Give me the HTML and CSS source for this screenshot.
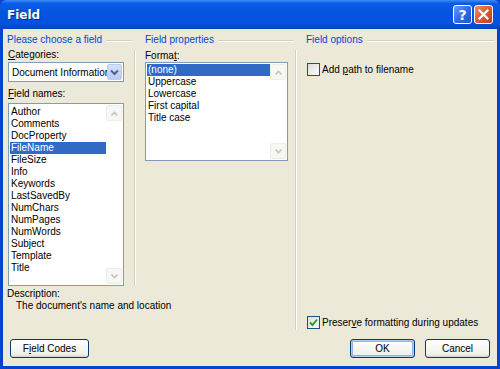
FILE: index.html
```html
<!DOCTYPE html>
<html lang="en">
<head>
    <meta charset="UTF-8">
    <title>Field</title>
    <link rel="stylesheet" href="styles.css">
</head>
<body>
    <div class="window">
        <div class="titlebar">
            <span class="title">Field</span>
            <div class="title-buttons">
                <span class="tbtn tbtn-help">?</span>
                <span class="tbtn tbtn-close">
                    <svg width="11" height="11" viewBox="0 0 11 11"><path d="M1.5 1.5 L9.5 9.5 M9.5 1.5 L1.5 9.5" stroke="#fff" stroke-width="2.2" stroke-linecap="square"/></svg>
                </span>
            </div>
        </div>
        <div class="frame">
            <div class="main">
                <div class="left">
                    <div class="cols">
                        <div class="col col-choose">
                            <div class="group-title"><span>Please choose a field</span><i class="rule"></i></div>
                            <div class="group-body">
                                <div class="label"><u>C</u>ategories:</div>
                                <div class="combo">
                                    <span class="combo-text">Document Information</span>
                                    <span class="combo-btn">
                                        <svg width="9" height="7" viewBox="0 0 9 7"><path d="M1 1.5 L4.5 5 L8 1.5" fill="none" stroke="#4d6185" stroke-width="2"/></svg>
                                    </span>
                                </div>
                                <div class="label label-gap"><u>F</u>ield names:</div>
                                <div class="listbox listbox-names">
                                    <ul class="items">
                                        <li>Author</li>
                                        <li>Comments</li>
                                        <li>DocProperty</li>
                                        <li class="selected">FileName</li>
                                        <li>FileSize</li>
                                        <li>Info</li>
                                        <li>Keywords</li>
                                        <li>LastSavedBy</li>
                                        <li>NumChars</li>
                                        <li>NumPages</li>
                                        <li>NumWords</li>
                                        <li>Subject</li>
                                        <li>Template</li>
                                        <li>Title</li>
                                    </ul>
                                    <div class="scrollbar">
                                        <span class="sb-btn"><svg width="7" height="5" viewBox="0 0 7 5"><path d="M0.5 4.5 L3.5 1.5 L6.5 4.5" fill="none" stroke="#c9c7ba" stroke-width="1.6"/></svg></span>
                                        <span class="sb-btn"><svg width="7" height="5" viewBox="0 0 7 5"><path d="M0.5 0.5 L3.5 3.5 L6.5 0.5" fill="none" stroke="#c9c7ba" stroke-width="1.6"/></svg></span>
                                    </div>
                                </div>
                            </div>
                        </div>
                        <div class="col col-props">
                            <div class="group-title"><span>Field properties</span><i class="rule"></i></div>
                            <div class="group-body sep">
                                <div class="label">Forma<u>t</u>:</div>
                                <div class="listbox listbox-format">
                                    <ul class="items">
                                        <li class="selected">(none)</li>
                                        <li>Uppercase</li>
                                        <li>Lowercase</li>
                                        <li>First capital</li>
                                        <li>Title case</li>
                                    </ul>
                                    <div class="scrollbar">
                                        <span class="sb-btn"><svg width="7" height="5" viewBox="0 0 7 5"><path d="M0.5 4.5 L3.5 1.5 L6.5 4.5" fill="none" stroke="#c9c7ba" stroke-width="1.6"/></svg></span>
                                        <span class="sb-btn"><svg width="7" height="5" viewBox="0 0 7 5"><path d="M0.5 0.5 L3.5 3.5 L6.5 0.5" fill="none" stroke="#c9c7ba" stroke-width="1.6"/></svg></span>
                                    </div>
                                </div>
                            </div>
                        </div>
                    </div>
                    <div class="description">
                        <div>Description:</div>
                        <div class="description-text">The document's name and location</div>
                    </div>
                </div>
                <div class="col col-options">
                    <div class="group-title"><span>Field options</span><i class="rule"></i></div>
                    <div class="group-body sep options-body">
                        <div class="check">
                            <span class="box"></span>
                            <span>Add <u>p</u>ath to filename</span>
                        </div>
                        <div class="check check-bottom">
                            <span class="box">
                                <svg width="9" height="9" viewBox="0 0 9 9"><path d="M1 4.5 L3.5 7 L8 1.5" fill="none" stroke="#21a121" stroke-width="1.9"/></svg>
                            </span>
                            <span>Preser<u>v</u>e formatting during updates</span>
                        </div>
                    </div>
                </div>
            </div>
            <div class="buttons">
                <span class="button btn-codes">F<u>i</u>eld Codes</span>
                <span class="spacer"></span>
                <span class="button btn-default">OK</span>
                <span class="button">Cancel</span>
            </div>
        </div>
    </div>
</body>
</html>
```

FILE: styles.css
```css
body {
    margin: 0;
    font-family: "Liberation Sans", Arial, sans-serif;
    font-size: 10px;
    color: #000;
    background-color: #ece9d8;
}

u {
    text-decoration: underline;
    text-underline-offset: 1px;
}

.window {
    width: 500px;
    height: 369px;
    display: flex;
    flex-direction: column;
    background-color: #0842d0;
}

.titlebar {
    height: 29px;
    display: flex;
    align-items: center;
    justify-content: space-between;
    padding: 0 7px 0 7px;
    box-sizing: border-box;
    border-radius: 6px 6px 0 0;
    background: linear-gradient(to bottom, #3d8bf5 0%, #0a5ce6 12%, #0553de 50%, #0452e0 80%, #0844c4 100%);
}

.title {
    color: #fff;
    font-family: "DejaVu Sans", sans-serif;
    font-weight: bold;
    font-size: 12px;
    text-shadow: 1px 1px 0 #0a2a8a;
}

.title-buttons {
    display: flex;
    gap: 2px;
}

.tbtn {
    width: 19px;
    height: 19px;
    box-sizing: border-box;
    border: 1px solid #fff;
    border-radius: 3px;
    display: flex;
    align-items: center;
    justify-content: center;
    color: #fff;
    font-family: "DejaVu Sans", sans-serif;
    font-weight: bold;
    font-size: 14px;
}

.tbtn-help {
    background: linear-gradient(135deg, #6b9cf7 0%, #2f6de8 50%, #1c52d0 100%);
}

.tbtn-close {
    background: linear-gradient(135deg, #f08e6a 0%, #e25a30 50%, #c4381a 100%);
}

.frame {
    flex: 1;
    margin: 0 3px 3px 3px;
    background-color: #ece9d8;
    display: flex;
    flex-direction: column;
}

.main {
    height: 305px;
    display: flex;
    padding-top: 5px;
    box-sizing: border-box;
}

.left {
    display: flex;
    flex-direction: column;
}

.cols {
    display: flex;
    height: 252px;
}

.group-title {
    height: 16px;
    display: flex;
    align-items: flex-start;
    color: #0046d5;
    line-height: 12px;
}

.rule {
    flex: 1;
    margin: 6px 2px 0 4px;
    border-top: 1px solid #d0d0bf;
    border-bottom: 1px solid #fff;
    height: 0;
}

.col-choose {
    width: 131px;
    padding-left: 4px;
    box-sizing: border-box;
    display: flex;
    flex-direction: column;
}

.col-props {
    width: 161px;
    display: flex;
    flex-direction: column;
}

.col-props .group-title,
.col-options .group-title {
    padding-left: 11px;
}

.col-options {
    flex: 1;
    display: flex;
    flex-direction: column;
}

.group-body {
    flex: 1;
    display: flex;
    flex-direction: column;
    padding-left: 1px;
}

.sep {
    border-left: 1px solid #d0d0bf;
    box-shadow: inset 1px 0 0 #fff;
    padding-left: 10px;
}

.label {
    line-height: 12px;
    height: 12px;
}

.label-gap {
    margin-top: 6px;
}

.combo {
    margin-top: 1px;
    width: 116px;
    height: 20px;
    box-sizing: border-box;
    border: 1px solid #7f9db9;
    background-color: #fff;
    display: flex;
    align-items: center;
    padding: 0 1px 0 3px;
}

.combo-text {
    flex: 1;
    overflow: hidden;
    white-space: nowrap;
}

.combo-btn {
    width: 15px;
    height: 16px;
    box-sizing: border-box;
    border: 1px solid #b9cbf5;
    border-radius: 2px;
    background: linear-gradient(to bottom, #d5e0fb, #b8cbf7);
    display: flex;
    align-items: center;
    justify-content: center;
}

.listbox {
    box-sizing: border-box;
    border: 1px solid #7f9db9;
    background-color: #fff;
    display: flex;
    padding: 1px;
}

.listbox-names {
    margin-top: 3px;
    width: 116px;
    height: 183px;
    padding-top: 2px;
}

.listbox-names .scrollbar {
    margin-top: -1px;
}

.listbox-format {
    width: 143px;
    height: 99px;
}

.items {
    list-style: none;
    margin: 0;
    padding: 0;
    flex: 1;
}

.items li {
    height: 12px;
    line-height: 12px;
    padding-left: 1px;
}

.items li.selected {
    background-color: #316ac5;
    color: #fff;
}

.scrollbar {
    width: 16px;
    display: flex;
    flex-direction: column;
    justify-content: space-between;
}

.sb-btn {
    height: 16px;
    box-sizing: border-box;
    border: 1px solid #eeede5;
    border-radius: 2px;
    background-color: #f7f7f3;
    display: flex;
    align-items: center;
    justify-content: center;
}

.description {
    padding: 2px 0 0 4px;
    line-height: 12px;
}

.description-text {
    padding-left: 9px;
}

.options-body {
    margin-bottom: 4px;
    padding-left: 11px;
}

.check {
    display: flex;
    align-items: center;
    gap: 2px;
    margin-top: 13px;
    line-height: 13px;
}

.check-bottom {
    margin-top: auto;
    margin-bottom: 1px;
}

.box {
    width: 13px;
    height: 13px;
    box-sizing: border-box;
    border: 1px solid #1c5180;
    background: linear-gradient(135deg, #dcdcd7, #fff);
    display: flex;
    align-items: center;
    justify-content: center;
}

.buttons {
    display: flex;
    align-items: center;
    padding: 5px 7px 0 7px;
    gap: 10px;
}

.spacer {
    flex: 1;
}

.button {
    width: 65px;
    height: 19px;
    box-sizing: border-box;
    border: 1px solid #003c74;
    border-radius: 3px;
    background: linear-gradient(to bottom, #ffffff, #f0f0ea 85%, #d6d0c5);
    display: flex;
    align-items: center;
    justify-content: center;
}

.btn-codes {
    width: 79px;
}

.btn-default {
    box-shadow: inset 0 0 0 1px #b3ccf5, inset 0 0 0 2px #8db2f0;
}
```
